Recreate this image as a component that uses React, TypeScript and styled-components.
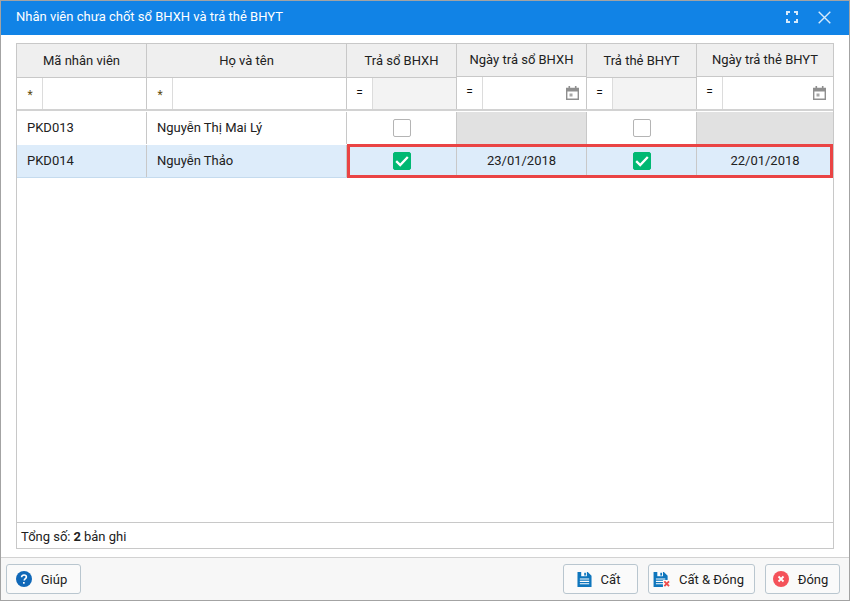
import React from "react";
import styled, { createGlobalStyle } from "styled-components";

const COLUMNS = "129px 200px 110px 130px 110px 137px";
const LINE = "#c8c8c8";

const GlobalStyle = createGlobalStyle`
  html, body {
    margin: 0;
    padding: 0;
    background: #fff;
  }
  * {
    box-sizing: border-box;
  }
`;

const Dialog = styled.div`
  width: 850px;
  height: 601px;
  display: flex;
  flex-direction: column;
  border: 1px solid #a3a3a3;
  font-family: Roboto, "Liberation Sans", sans-serif;
  font-size: 13px;
  color: #212121;
  background: #fff;
`;

const TitleBar = styled.div`
  height: 34px;
  flex: none;
  display: flex;
  align-items: center;
  padding: 0 15px;
  background: #1183e6;
  color: #fff;
`;

const Title = styled.div`
  flex: 1;
  margin-top: -3px;
`;

const TitleIcons = styled.div`
  display: flex;
  align-items: center;
  gap: 20px;
  padding: 0 3px 2px 0;
`;

const Body = styled.div`
  flex: 1;
  padding: 8px 15px 8px;
  display: flex;
  min-height: 0;
`;

const Grid = styled.div`
  flex: 1;
  display: flex;
  flex-direction: column;
  border: 1px solid ${LINE};
`;

const Row = styled.div`
  display: grid;
  grid-template-columns: ${COLUMNS};
  flex: none;
  position: relative;
`;

const HeaderCell = styled.div<{ $date?: boolean }>`
  height: ${(props) => (props.$date ? "33px" : "34px")};
  display: flex;
  align-items: center;
  justify-content: center;
  background: #efefef;
  border-left: 1px solid ${LINE};
  border-bottom: 1px solid ${LINE};
  padding-bottom: 1px;

  &:first-child {
    border-left: 0;
  }
`;

const FilterRow = styled(Row)`
  border-bottom: 2px solid #d2d2d2;
  margin-bottom: 1px;
`;

const FilterCell = styled.div<{ $date?: boolean }>`
  height: ${(props) => (props.$date ? "32px" : "31px")};
  margin-top: ${(props) => (props.$date ? "-1px" : "0")};
  display: flex;
  border-left: 1px solid ${LINE};

  &:first-child {
    border-left: 0;
  }
`;

const Operator = styled.div<{ $star?: boolean }>`
  width: 26px;
  flex: none;
  display: flex;
  align-items: center;
  justify-content: center;
  border-right: 1px solid #dcdcdc;
  font-size: 12px;
  padding: ${(props) => (props.$star ? "3px 0 0 1px" : "0 0 2px")};
  color: ${(props) => (props.$star ? "#5e4a10" : "#111")};
`;

const FilterInput = styled.div<{ $disabled?: boolean }>`
  flex: 1;
  display: flex;
  align-items: center;
  justify-content: flex-end;
  padding-right: 7px;
  background: ${(props) => (props.$disabled ? "#f3f3f3" : "#fff")};
`;

const DataRow = styled(Row)<{ $selected?: boolean }>`
  background: ${(props) => (props.$selected ? "#ddecfa" : "#fff")};
  border-bottom: 1px solid ${(props) => (props.$selected ? "#c5dbee" : "transparent")};
`;

const Cell = styled.div<{ $center?: boolean; $blocked?: boolean }>`
  height: 32px;
  display: flex;
  align-items: center;
  justify-content: ${(props) => (props.$center ? "center" : "flex-start")};
  padding: ${(props) => (props.$center ? "0 0 1px" : "0 10px 1px")};
  border-left: 1px solid ${LINE};
  background: ${(props) => (props.$blocked ? "#e1e1e1" : "transparent")};

  &:first-child {
    border-left: 0;
  }
`;

const RedFrame = styled.div`
  position: absolute;
  top: -1px;
  bottom: -1px;
  left: 330px;
  right: 0;
  border: 3px solid #ea4444;
  pointer-events: none;
`;

const CheckBox = styled.div<{ $checked?: boolean }>`
  width: 18px;
  height: 18px;
  margin: 0 0 -1px 1px;
  display: flex;
  align-items: center;
  justify-content: center;
  border-radius: 2px;
  border: 1px solid ${(props) => (props.$checked ? "#00b873" : "#b4b4b4")};
  background: ${(props) => (props.$checked ? "#00b873" : "#fff")};
`;

const GridSpace = styled.div`
  flex: 1;
`;

const GridFooter = styled.div`
  height: 26px;
  flex: none;
  display: flex;
  align-items: center;
  gap: 3px;
  padding: 1px 0 0 4px;
  border-top: 1px solid ${LINE};
`;

const Footer = styled.div`
  height: 43px;
  flex: none;
  display: flex;
  align-items: flex-start;
  gap: 10px;
  padding: 6px 9px 0 5px;
  background: #f7f7f7;
  border-top: 1px solid #d2d2d2;
`;

const Button = styled.div<{ $width: number; $tight?: boolean }>`
  width: ${(props) => props.$width}px;
  height: 30px;
  display: flex;
  align-items: center;
  justify-content: center;
  gap: ${(props) => (props.$tight ? "8px" : "9px")};
  padding-right: ${(props) => (props.$tight ? "6px" : "4px")};
  background: #fafafa;
  border: 1px solid #b9c6cf;
  border-radius: 3px;
`;

const Spacer = styled.div`
  flex: 1;
`;

const CalendarIcon = () => (
  <svg width="13" height="14" viewBox="0 0 13 14">
    <path d="M.7 2.5h11.6v10.8H.7z" fill="#fff" stroke="#8f8f8f" strokeWidth="1.4" />
    <path d="M0 2h13v3.5H0z" fill="#8f8f8f" />
    <rect x="2.5" y="0" width="1.6" height="2" fill="#8f8f8f" />
    <rect x="8.9" y="0" width="1.6" height="2" fill="#8f8f8f" />
    <rect x="3.5" y="7.5" width="3" height="3" fill="#a8a8a8" />
  </svg>
);

const CheckMark = () => (
  <svg width="14" height="12" viewBox="0 0 14 12">
    <path d="M1.2 6.2 5.2 10 12.8 2" fill="none" stroke="#fff" strokeWidth="2.3" />
  </svg>
);

const MaximizeIcon = () => (
  <svg width="12" height="12" viewBox="0 0 12 12">
    <path
      d="M1 4V1h3M8 1h3v3M11 8v3H8M4 11H1V8"
      fill="none"
      stroke="#d6eafb"
      strokeWidth="2"
    />
  </svg>
);

const CloseIcon = () => (
  <svg width="13" height="13" viewBox="0 0 13 13">
    <path d="M.7.7l11.6 11.6M12.3.7.7 12.3" fill="none" stroke="#d6eafb" strokeWidth="1.4" />
  </svg>
);

const HelpIcon = () => (
  <svg width="16" height="16" viewBox="0 0 16 16">
    <circle cx="8" cy="8" r="8" fill="#1068b8" />
    <path
      d="M5.6 6.2c0-1.4 1-2.2 2.4-2.2s2.4.8 2.4 2c0 1.7-2.2 1.7-2.2 3.6"
      fill="none"
      stroke="#fff"
      strokeWidth="1.6"
    />
    <rect x="7" y="11" width="1.7" height="1.7" fill="#fff" />
  </svg>
);

const SaveShape = () => (
  <>
    <path d="M0 0h11l4 4v12H0z" fill="#0f76bd" />
    <rect x="4" y="0" width="6" height="4.5" fill="#fff" />
    <rect x="7.2" y="0.8" width="1.8" height="3" fill="#0f76bd" />
    <path d="M2.5 7.5h10M2.5 10h10M2.5 12.5h10" stroke="#fff" strokeWidth="1.2" />
  </>
);

const SaveIcon = () => (
  <svg width="15" height="15" viewBox="0 0 15 16">
    <SaveShape />
  </svg>
);

const SaveCloseIcon = () => (
  <svg width="18" height="15" viewBox="0 0 18 16">
    <SaveShape />
    <rect x="10" y="8.5" width="8" height="7.5" fill="#fafafa" />
    <path d="M11.5 10 16.5 15M16.5 10 11.5 15" stroke="#ee4b4b" strokeWidth="2" />
  </svg>
);

const CloseCircleIcon = () => (
  <svg width="16" height="16" viewBox="0 0 16 16">
    <circle cx="8" cy="8" r="8" fill="#f4525a" />
    <path d="M5.5 5.5l5 5M10.5 5.5l-5 5" stroke="#fff" strokeWidth="1.8" />
  </svg>
);

const App = () => {
  return (
    <Dialog>
      <GlobalStyle />
      <TitleBar>
        <Title>Nhân viên chưa chốt sổ BHXH và trả thẻ BHYT</Title>
        <TitleIcons>
          <MaximizeIcon />
          <CloseIcon />
        </TitleIcons>
      </TitleBar>

      <Body>
        <Grid>
          <Row>
            <HeaderCell>Mã nhân viên</HeaderCell>
            <HeaderCell>Họ và tên</HeaderCell>
            <HeaderCell>Trả sổ BHXH</HeaderCell>
            <HeaderCell $date>Ngày trả sổ BHXH</HeaderCell>
            <HeaderCell>Trả thẻ BHYT</HeaderCell>
            <HeaderCell $date>Ngày trả thẻ BHYT</HeaderCell>
          </Row>

          <FilterRow>
            <FilterCell>
              <Operator $star>*</Operator>
              <FilterInput />
            </FilterCell>
            <FilterCell>
              <Operator $star>*</Operator>
              <FilterInput />
            </FilterCell>
            <FilterCell>
              <Operator>=</Operator>
              <FilterInput $disabled />
            </FilterCell>
            <FilterCell $date>
              <Operator>=</Operator>
              <FilterInput>
                <CalendarIcon />
              </FilterInput>
            </FilterCell>
            <FilterCell>
              <Operator>=</Operator>
              <FilterInput $disabled />
            </FilterCell>
            <FilterCell $date>
              <Operator>=</Operator>
              <FilterInput>
                <CalendarIcon />
              </FilterInput>
            </FilterCell>
          </FilterRow>

          <DataRow>
            <Cell>PKD013</Cell>
            <Cell>Nguyễn Thị Mai Lý</Cell>
            <Cell $center>
              <CheckBox />
            </Cell>
            <Cell $blocked />
            <Cell $center>
              <CheckBox />
            </Cell>
            <Cell $blocked />
          </DataRow>

          <DataRow $selected>
            <Cell>PKD014</Cell>
            <Cell>Nguyễn Thảo</Cell>
            <Cell $center>
              <CheckBox $checked>
                <CheckMark />
              </CheckBox>
            </Cell>
            <Cell $center>23/01/2018</Cell>
            <Cell $center>
              <CheckBox $checked>
                <CheckMark />
              </CheckBox>
            </Cell>
            <Cell $center>22/01/2018</Cell>
            <RedFrame />
          </DataRow>

          <GridSpace />

          <GridFooter>
            Tổng số: <b>2</b> bản ghi
          </GridFooter>
        </Grid>
      </Body>

      <Footer>
        <Button $width={75}>
          <HelpIcon />
          Giúp
        </Button>
        <Spacer />
        <Button $width={75}>
          <SaveIcon />
          Cất
        </Button>
        <Button $width={107} $tight>
          <SaveCloseIcon />
          Cất &amp; Đóng
        </Button>
        <Button $width={75}>
          <CloseCircleIcon />
          Đóng
        </Button>
      </Footer>
    </Dialog>
  );
};

export default App;
